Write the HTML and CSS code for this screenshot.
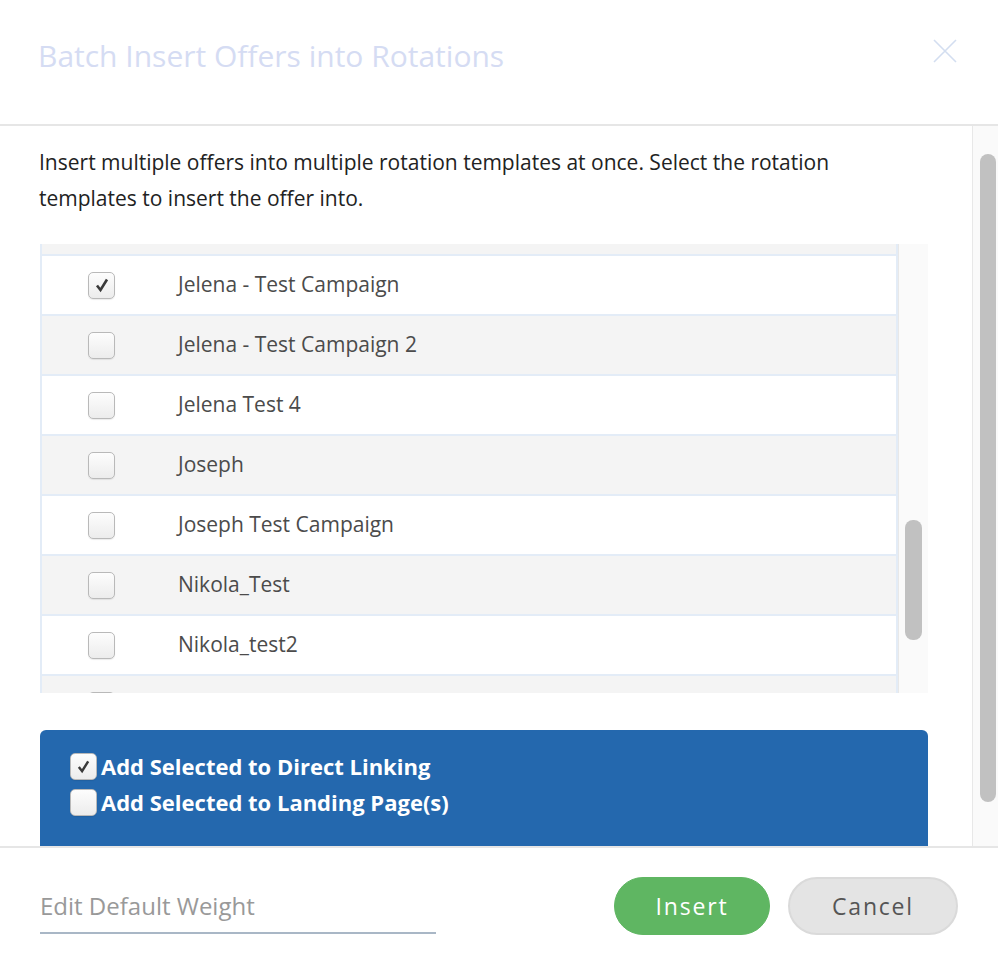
FILE: index.html
```html
<!DOCTYPE html>
<html lang="en">
<head>
    <title>Batch Insert Offers into Rotations</title>
    <link rel="stylesheet" href="styles.css">
</head>
<body>
    <div class="modal">
        <div class="modal-header">
            <h1>Batch Insert Offers into Rotations</h1>
            <span class="close">
                <svg width="26" height="26" viewBox="0 0 26 26"><path d="M2 2 L24 24 M24 2 L2 24" stroke="#d3def0" stroke-width="1.6" fill="none"/></svg>
            </span>
        </div>
        <div class="modal-body">
            <div class="body-content">
                <p class="intro">Insert multiple offers into multiple rotation templates at once. Select the rotation templates to insert the offer into.</p>
                <div class="list">
                    <div class="rows">
                        <div class="row grey partial-top"></div>
                        <div class="row">
                            <span class="check checked"><svg width="16" height="16" viewBox="0 0 16 16"><path d="M3 8.5 L6.5 13 L13 2.5" stroke="#3a3a3a" stroke-width="2.6" fill="none"/></svg></span>
                            <span class="name">Jelena - Test Campaign</span>
                        </div>
                        <div class="row grey">
                            <span class="check"></span>
                            <span class="name">Jelena - Test Campaign 2</span>
                        </div>
                        <div class="row">
                            <span class="check"></span>
                            <span class="name">Jelena Test 4</span>
                        </div>
                        <div class="row grey">
                            <span class="check"></span>
                            <span class="name">Joseph</span>
                        </div>
                        <div class="row">
                            <span class="check"></span>
                            <span class="name">Joseph Test Campaign</span>
                        </div>
                        <div class="row grey">
                            <span class="check"></span>
                            <span class="name">Nikola_Test</span>
                        </div>
                        <div class="row">
                            <span class="check"></span>
                            <span class="name">Nikola_test2</span>
                        </div>
                        <div class="row grey">
                            <span class="check"></span>
                        </div>
                    </div>
                    <div class="scroll inner-scroll"><div class="thumb"></div></div>
                </div>
                <div class="options">
                    <label class="option"><span class="check small checked"><svg width="15" height="15" viewBox="0 0 16 16"><path d="M3 8.5 L6.5 13 L13 2.5" stroke="#3a3a3a" stroke-width="2.6" fill="none"/></svg></span>Add Selected to Direct Linking</label>
                    <label class="option"><span class="check small"></span>Add Selected to Landing Page(s)</label>
                </div>
            </div>
            <div class="scroll outer-scroll"><div class="thumb"></div></div>
        </div>
        <div class="modal-footer">
            <input type="text" class="weight" placeholder="Edit Default Weight">
            <div class="buttons">
                <button class="btn insert">Insert</button>
                <button class="btn cancel">Cancel</button>
            </div>
        </div>
    </div>
</body>
</html>
```

FILE: styles.css
```css
body {
    margin: 0;
    font-family: "Open Sans", Lato, sans-serif;
    background: #fff;
}

.modal {
    width: 998px;
    height: 962px;
    display: flex;
    flex-direction: column;
}

.modal-header {
    height: 124px;
    border-bottom: 2px solid #e6e6e6;
    display: flex;
    justify-content: space-between;
    align-items: center;
    padding: 0 40px 0 38px;
}
.modal-header h1 {
    margin: 0;
    font-size: 30px;
    font-weight: 400;
    color: #d5dcf3;
    padding-bottom: 14px;
}
.close {
    display: flex;
    margin-top: -22px;
}

.modal-body {
    height: 720px;
    display: flex;
    overflow: hidden;
}
.body-content {
    flex: 1;
    padding: 0 44px 0 40px;
}
.intro {
    margin: 18px 0 28px -1px;
    font-size: 21px;
    line-height: 36px;
    color: #222;
}

.list {
    height: 449px;
    display: flex;
    background: #f4f4f4;
}
.rows {
    flex: 1;
    overflow: hidden;
    border-left: 2px solid #e3ecf7;
    border-right: 2px solid #e3ecf7;
}
.row {
    height: 58px;
    border-bottom: 2px solid #e3ecf7;
    background: #fff;
    display: flex;
    align-items: center;
    padding-left: 46px;
}
.row.grey {
    background: #f4f4f4;
}
.row.partial-top {
    height: 10px;
}
.name {
    margin-left: 63px;
    font-size: 21px;
    color: #4b4b4b;
    margin-top: -2px;
}

.check {
    width: 27px;
    height: 27px;
    box-sizing: border-box;
    border: 1px solid #b9b9b9;
    border-radius: 5px;
    background: linear-gradient(#fdfdfd, #ececec);
    box-shadow: 0 1px 1px rgba(0, 0, 0, 0.08);
    display: flex;
    align-items: center;
    justify-content: center;
    flex-shrink: 0;
}

.scroll {
    background: #fafafa;
    border-left: 1px solid #e8e8e8;
    box-sizing: border-box;
}
.inner-scroll {
    width: 30px;
    padding: 276px 6px 0 6px;
}
.inner-scroll .thumb {
    height: 120px;
}
.outer-scroll {
    width: 26px;
    padding: 28px 2px 0 7px;
}
.outer-scroll .thumb {
    height: 648px;
}
.thumb {
    background: #c1c1c1;
    border-radius: 8px;
}

.options {
    margin-top: 37px;
    background: #2468ae;
    border-radius: 6px 6px 0 0;
    padding: 18px 30px 40px;
    height: 100px;
}
.option {
    display: flex;
    align-items: center;
    font-size: 22px;
    font-weight: 700;
    color: #fff;
    height: 36px;
}
.check.small {
    margin-right: 4px;
}

.modal-footer {
    flex: 1;
    border-top: 2px solid #e6e6e6;
    display: flex;
    align-items: center;
    justify-content: space-between;
    padding: 0 40px 0 40px;
}
.weight {
    width: 396px;
    border: none;
    border-bottom: 2px solid #a9b7c6;
    font-family: inherit;
    font-size: 24px;
    padding: 8px 0 10px;
    margin-top: 4px;
    outline: none;
}
.weight::placeholder {
    color: #999;
}
.buttons {
    display: flex;
    gap: 18px;
    margin-top: 2px;
}
.btn {
    height: 58px;
    border-radius: 29px;
    font-family: inherit;
    font-size: 23px;
    letter-spacing: 1.8px;
    cursor: pointer;
}
.insert {
    width: 156px;
    background: #5fb662;
    border: 1px solid #5fb662;
    color: #fff;
}
.cancel {
    width: 170px;
    background: #e4e4e4;
    border: 2px solid #dadada;
    color: #555;
}
```
